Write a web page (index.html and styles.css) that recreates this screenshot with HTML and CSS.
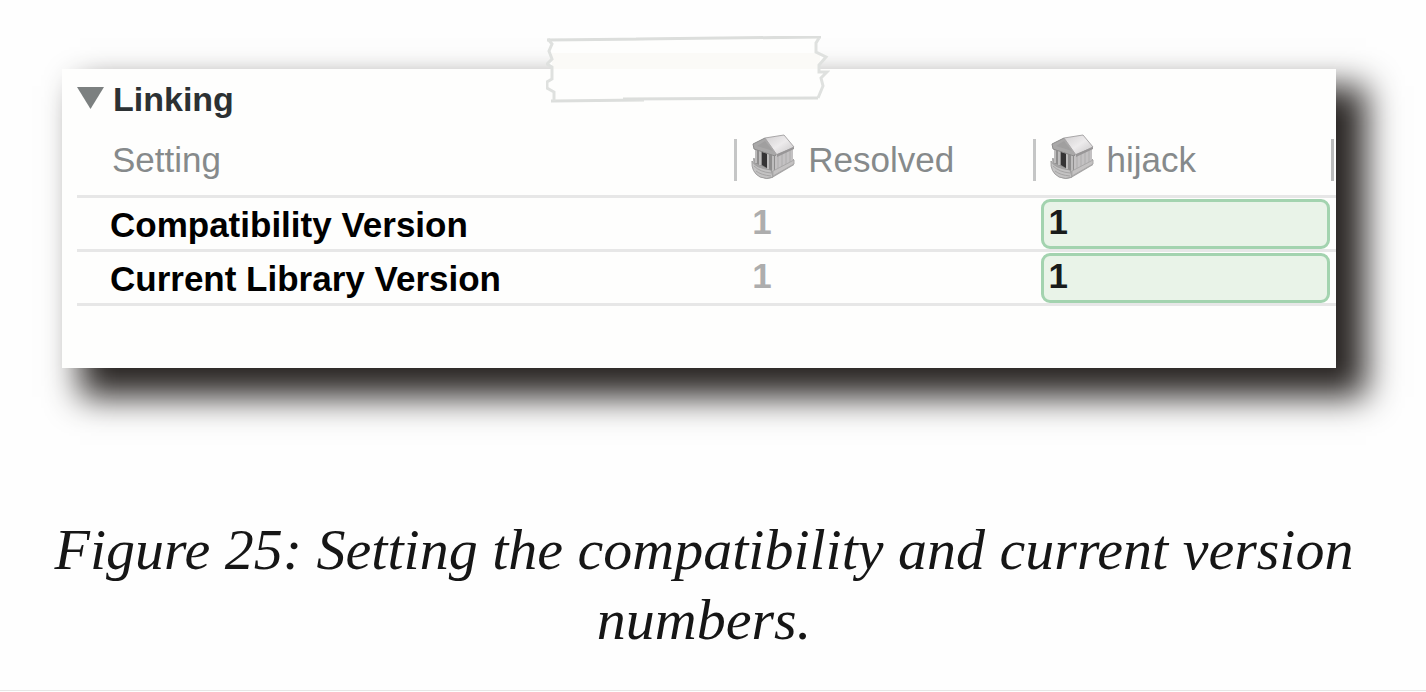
FILE: index.html
```html
<!DOCTYPE html>
<html lang="en">
<head>
<meta charset="utf-8">
<title>Figure 25</title>
<link rel="stylesheet" href="styles.css">
</head>
<body>
<svg class="sprite" aria-hidden="true">
  <defs>
    <linearGradient id="roof" x1="0" y1="0" x2="1" y2="1">
      <stop offset="0" stop-color="#d2d0d1"/><stop offset="0.5" stop-color="#edebec"/><stop offset="1" stop-color="#c6c4c5"/>
    </linearGradient>
    <symbol id="library" viewBox="0 0 44 46">
      <path d="M2 24L3 37Q6 43 16 45L21 44L43 31V25L21 27Z" fill="#a4a3a3"/>
      <path d="M1 27Q4 34 20 36L22 43Q16 46 9 43Q0 38 1 27Z" fill="#c3c2c2" stroke="#a09f9f"/>
      <path d="M3 32Q9 38 20 39M5 37Q10 41 20 42" fill="none" stroke="#a5a4a4"/>
      <path d="M4 14L24 18V38L4 29Z" fill="#8e8d8d"/>
      <path d="M11 16L16 17V34L11 31Z" fill="#343334"/>
      <path d="M5 15V29M9 16V31M17 18V35M22 19V37" stroke="#bdbcbc" stroke-width="2"/>
      <path d="M24 20L42 13V29L24 39Z" fill="#c3c1c2"/>
      <path d="M27 21V36M31 19V34M35 17V32M39 15V30" stroke="#aeadad"/>
      <path d="M22 37L43 26V30L22 42Z" fill="#c4c2c2" stroke="#aaa9a9"/>
      <path d="M2 10L14 4L26 19L24 22L3 15Z" fill="#a9a8a8" stroke="#8b8a8a"/>
      <path d="M6 12L14 7L22 17Z" fill="#a09f9f"/>
      <path d="M14 4L33 1L43 13L26 21Z" fill="url(#roof)" stroke="#a9a7a8"/>
      <path d="M26 20L43 13V15L26 23Z" fill="#989697"/>
    </symbol>
  </defs>
</svg>
<main class="page">
  <figure class="figure">
    <section class="panel">
      <svg class="tape" viewBox="0 0 284 68" aria-hidden="true">
        <path d="M1 3L273 1L269 6V17L280 21L273 29V36L281 41L276 44L277 52L272 63L120 65L5 67L6 58L1 52V46L6 44V31L2 28L6 25L3 17L6 9Z" fill="#fefefd"/>
        <rect x="6" y="17" width="268" height="16" fill="#f7f5f2" opacity="0.55"/>
        <path d="M1 4L101 3M90 3L275 1M5 65L98 64M77 63L272 62" fill="none" stroke="#dcdedc" stroke-width="3"/>
        <path d="M2 3L6 8L3 15L6 23L1 28L6 31V43L1 46V52L8 56V65M273 2L270 7V16L280 21L273 29V36H281L275 42L277 50L272 62" fill="none" stroke="#dfe1df" stroke-width="3"/>
      </svg>
      <button class="disclosure" type="button" aria-expanded="true">
        <svg class="triangle" viewBox="0 0 27 22" aria-hidden="true"><path d="M0 0H27L13.500 22Z" fill="#7c8080"/></svg>
        <span>Linking</span>
      </button>
      <table class="settings">
        <thead>
          <tr>
            <th class="name" scope="col">Setting</th>
            <th class="resolved" scope="col"><span class="head"><svg class="icon" aria-hidden="true"><use href="#library"/></svg>Resolved</span></th>
            <th class="target" scope="col"><span class="head last"><svg class="icon" aria-hidden="true"><use href="#library"/></svg>hijack</span></th>
          </tr>
        </thead>
        <tbody>
          <tr>
            <th class="name" scope="row"><label for="compat">Compatibility Version</label></th>
            <td class="value">1</td>
            <td class="edit"><input id="compat" class="field" type="text" value="1"></td>
          </tr>
          <tr>
            <th class="name" scope="row"><label for="current">Current Library Version</label></th>
            <td class="value">1</td>
            <td class="edit"><input id="current" class="field" type="text" value="1"></td>
          </tr>
        </tbody>
      </table>
    </section>
    <figcaption class="caption">Figure 25: Setting the compatibility and current version numbers.</figcaption>
  </figure>
</main>
</body>
</html>
```
FILE: styles.css
```css
* {
  box-sizing: border-box;
}

body {
  margin: 0;
  background: #fefefe;
  font-family: "Liberation Sans", Arial, sans-serif;
}

.sprite {
  position: absolute;
  width: 0;
  height: 0;
}

.page {
  min-height: calc(100vh - 1px);
  padding-top: 69px;
  border-bottom: 1px solid #e6e6e6;
}

.figure {
  margin: 0;
}

.panel {
  position: relative;
  margin: 0 90px 0 62px;
  padding: 8px 0 62px 15px;
  background: #fefefd;
  box-shadow: 24px 23px 32px 6px #2a2624;
}

.tape {
  position: absolute;
  top: -33px;
  left: 38%;
  width: 284px;
  height: 68px;
}

.disclosure {
  display: flex;
  align-items: center;
  gap: 9px;
  padding: 0;
  border: 0;
  background: none;
  color: #2c3133;
  font: bold 34px/44px "Liberation Sans", Arial, sans-serif;
}

.triangle {
  width: 27px;
  height: 22px;
  margin-bottom: 2px;
}

.settings {
  width: 100%;
  table-layout: fixed;
  border-collapse: separate;
  border-spacing: 0;
  font-size: 35px;
  line-height: 44px;
}

.settings th,
.settings td {
  height: 54px;
  padding: 0;
  border-bottom: 3px solid #e7e7e7;
  text-align: left;
}

.settings tbody th {
  padding-top: 2px;
}

.settings thead th {
  height: 77px;
  padding-top: 3px;
  color: #868a8b;
  font-weight: normal;
}

.settings .name {
  padding-left: 33px;
}

.settings thead .name {
  width: 52.2%;
  padding-left: 35px;
}

.settings .resolved {
  width: 23.7%;
}

.head {
  display: flex;
  align-items: center;
  gap: 13px;
  height: 42px;
  padding-left: 14px;
  border-left: 3px solid #c5c6c6;
}

.last {
  margin-right: 2px;
  border-right: 3px solid #bbbcbc;
}

.icon {
  width: 44px;
  height: 46px;
  margin-bottom: 6px;
}

.settings .value {
  padding: 0 0 4px 18px;
  color: #adadad;
  font-weight: bold;
}

.settings .edit {
  padding: 0 6px 0 8px;
}

.field {
  display: block;
  width: 100%;
  height: 50px;
  padding: 0 5px 4px;
  border: 3px solid #a3d3af;
  border-radius: 9px;
  background: #e9f3e8;
  color: #191b1b;
  font: bold 35px/40px "Liberation Sans", Arial, sans-serif;
}

.caption {
  margin-top: 147px;
  padding: 0 52px 0 34px;
  color: #161616;
  font: italic 58px/70px "Liberation Serif", "Times New Roman", serif;
  text-align: center;
}
```
